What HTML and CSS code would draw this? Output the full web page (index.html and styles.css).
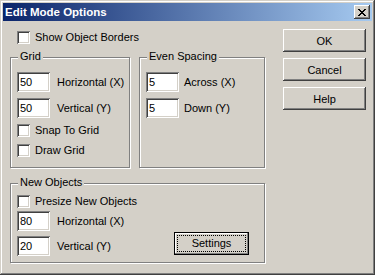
FILE: index.html
```html
<!DOCTYPE html>
<html lang="en">
<head>
    <meta charset="UTF-8">
    <meta name="viewport" content="width=device-width, initial-scale=1.0">
    <title>Edit Mode Options</title>
    <link rel="stylesheet" href="styles.css">
</head>
<body>
    <div class="window">
        <div class="titlebar">
            <span class="title">Edit Mode Options</span>
            <span class="close-btn">
                <svg width="8" height="7" viewBox="0 0 8 7" shape-rendering="crispEdges">
                    <path d="M0 0h2v1H0z M6 0h2v1H6z M1 1h2v1H1z M5 1h2v1H5z M2 2h4v1H2z M3 3h2v1H3z M2 4h4v1H2z M1 5h2v1H1z M5 5h2v1H5z M0 6h2v1H0z M6 6h2v1H6z" fill="#000"/>
                </svg>
            </span>
        </div>

        <div class="dialog">
            <div class="main">
                <div class="check top-check"><span class="box"></span>Show Object Borders</div>

                <div class="group-row">
                    <div class="group grid-group">
                        <span class="group-label">Grid</span>
                        <div class="field"><span class="edit">50</span>Horizontal (X)</div>
                        <div class="field"><span class="edit">50</span>Vertical (Y)</div>
                        <div class="check"><span class="box"></span>Snap To Grid</div>
                        <div class="check"><span class="box"></span>Draw Grid</div>
                    </div>
                    <div class="group spacing-group">
                        <span class="group-label">Even Spacing</span>
                        <div class="field"><span class="edit">5</span>Across (X)</div>
                        <div class="field"><span class="edit">5</span>Down (Y)</div>
                    </div>
                </div>

                <div class="group objects-group">
                    <span class="group-label">New Objects</span>
                    <div class="check"><span class="box"></span>Presize New Objects</div>
                    <div class="field"><span class="edit">80</span>Horizontal (X)</div>
                    <div class="field">
                        <span class="edit">20</span>Vertical (Y)
                        <span class="btn default-btn"><span class="focus">Settings</span></span>
                    </div>
                </div>
            </div>

            <div class="buttons">
                <span class="btn">OK</span>
                <span class="btn">Cancel</span>
                <span class="btn">Help</span>
            </div>
        </div>
    </div>
</body>
</html>
```

FILE: styles.css
```css
body {
    margin: 0;
    background: #d4d0c8;
    font: 11px "Liberation Sans", Arial, sans-serif;
    color: #000;
}

.window {
    width: 375px;
    height: 275px;
    box-sizing: border-box;
    padding: 3px;
    background: #d4d0c8;
    box-shadow: inset -1px -1px #404040, inset 1px 1px #d4d0c8,
                inset -2px -2px #808080, inset 2px 2px #fff;
}

/* title bar */
.titlebar {
    height: 18px;
    display: flex;
    align-items: center;
    padding: 0 2px;
    background: linear-gradient(to right, #0a246a, #a6caf0);
    color: #fff;
    font-weight: bold;
    font-size: 11.5px;
}
.title { flex: 1; }
.close-btn {
    width: 16px;
    height: 14px;
    display: flex;
    align-items: center;
    justify-content: center;
    background: #d4d0c8;
    box-shadow: inset -1px -1px #404040, inset 1px 1px #fff,
                inset -2px -2px #808080;
}

/* body */
.dialog {
    display: flex;
    padding: 8px 6px 0 7px;
}
.main { width: 256px; }

.check {
    display: flex;
    align-items: center;
    gap: 5px;
    height: 13px;
    line-height: 13px;
    white-space: nowrap;
}
.box, .edit {
    flex: none;
    box-sizing: border-box;
    background: #fff;
    box-shadow: inset 1px 1px #808080, inset -1px -1px #fff,
                inset 2px 2px #404040, inset -2px -2px #d4d0c8;
}
.box { width: 13px; height: 13px; }
.top-check { margin: 2px 0 13px 7px; }

.field {
    display: flex;
    align-items: center;
    gap: 7px;
    height: 20px;
    white-space: nowrap;
}
.edit {
    width: 33px;
    height: 20px;
    padding-left: 3px;
    line-height: 20px;
}

/* group boxes */
.group-row {
    display: flex;
    gap: 9px;
}
.group {
    position: relative;
    box-sizing: border-box;
    border: 1px solid #808080;
    box-shadow: 1px 1px 0 #fff, inset 1px 1px 0 #fff;
    padding: 14px 6px 0;
}
.group-label {
    position: absolute;
    top: -8px;
    left: 7px;
    padding: 0 2px;
    line-height: 13px;
    background: #d4d0c8;
}
.grid-group { width: 120px; height: 111px; }
.spacing-group { width: 126px; height: 111px; }
.spacing-group .field { gap: 5px; }

.group .field { margin-bottom: 6px; }
.grid-group .check { margin: 1px 0 7px; }

.objects-group {
    width: 255px;
    height: 80px;
    margin-top: 15px;
    padding-top: 11px;
}
.objects-group .check { margin-bottom: 3px; }
.objects-group .field { margin-bottom: 5px; }

/* push buttons */
.btn {
    display: flex;
    align-items: center;
    justify-content: center;
    box-sizing: border-box;
    height: 23px;
    background: #d4d0c8;
    box-shadow: inset -1px -1px #404040, inset 1px 1px #fff,
                inset -2px -2px #808080;
}
.buttons {
    margin-left: 17px;
    display: flex;
    flex-direction: column;
    gap: 6px;
}
.buttons .btn { width: 83px; }

.default-btn {
    width: 75px;
    margin: 0 9px 0 auto;
    align-self: flex-end;
    position: relative;
    top: -1px;
    border: 1px solid #000;
    box-shadow: inset -1px -1px #808080, inset 1px 1px #fff;
}
.focus {
    width: 67px;
    height: 15px;
    line-height: 15px;
    text-align: center;
    border: 1px dotted #000;
}
```
